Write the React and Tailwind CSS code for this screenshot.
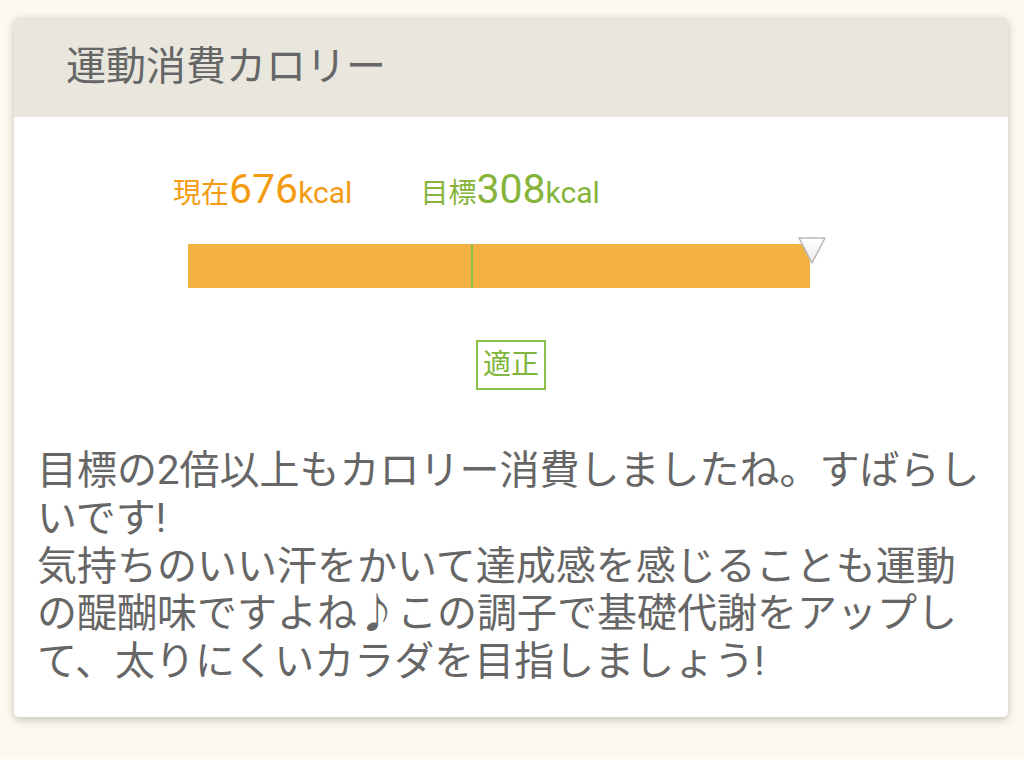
import React from 'react';

const data = {
  title: "運動消費カロリー",
  current: 676,
  target: 308,
  status: "適正",
  message: "目標の2倍以上もカロリー消費しましたね。すばらしいです!\n気持ちのいい汗をかいて達成感を感じることも運動の醍醐味ですよね♪この調子で基礎代謝をアップして、太りにくいカラダを目指しましょう!",
};

const App = () => {
  const targetPct = (data.target / data.current) * 100;

  return (
    <div className="min-h-screen bg-[#fdf9ee] pt-[17px] pl-[14px] pr-[16px] pb-[40px] font-['Roboto','Noto_Sans_CJK_JP',sans-serif]">
      <div className="bg-white rounded-[5px] overflow-hidden shadow-[0_3px_10px_rgba(0,0,0,0.22)]">

        {/* Header */}
        <div className="h-[100px] bg-[#e8e6dd] flex items-center pl-[52px]">
          <h2 className="text-[40px] leading-none text-[#666666]">{data.title}</h2>
        </div>

        {/* Gauge */}
        <div className="pt-[52px]">
          <div className="flex items-baseline pl-[159px] h-[44px]">
            <div className="flex items-baseline text-[#f39c12]">
              <span className="text-[28px]">現在</span>
              <span className="text-[41px] leading-none">{data.current}</span>
              <span className="text-[30px]">kcal</span>
            </div>
            <div className="flex items-baseline text-[#86b43a] ml-[68px]">
              <span className="text-[28px]">目標</span>
              <span className="text-[41px] leading-none">{data.target}</span>
              <span className="text-[30px]">kcal</span>
            </div>
          </div>

          <div className="mt-[31px] ml-[174px] w-[622px] h-[44px] relative">
            <div className="h-full w-full bg-[#f3b242]" />
            <div className="absolute top-0 bottom-0 w-[2px] bg-[#8cbf4a]" style={{ left: `${targetPct}%` }} />
            <svg className="absolute -top-[8px] -right-[18px]" width="32" height="30" viewBox="0 0 32 30">
              <defs>
                <linearGradient id="tri" x1="0" y1="0" x2="0" y2="1">
                  <stop offset="0" stopColor="#ffffff" />
                  <stop offset="1" stopColor="#ececec" />
                </linearGradient>
              </defs>
              <path d="M3 2 L29 2 L16 27 Z" fill="url(#tri)" stroke="#b8b8b8" strokeWidth="1.5" strokeLinejoin="round" />
            </svg>
          </div>

          <div className="flex justify-center mt-[52px]">
            <div className="border-2 border-[#8cbf4a] text-[#7fb53a] text-[28px] leading-none px-[5px] pt-[9px] pb-[9px]">
              {data.status}
            </div>
          </div>
        </div>

        {/* Message */}
        <p className="px-[23px] pt-[57px] pb-[31px] text-[40px] leading-[47.75px] text-[#666666] whitespace-pre-line">
          {data.message}
        </p>
      </div>
    </div>
  );
};

export default App;
